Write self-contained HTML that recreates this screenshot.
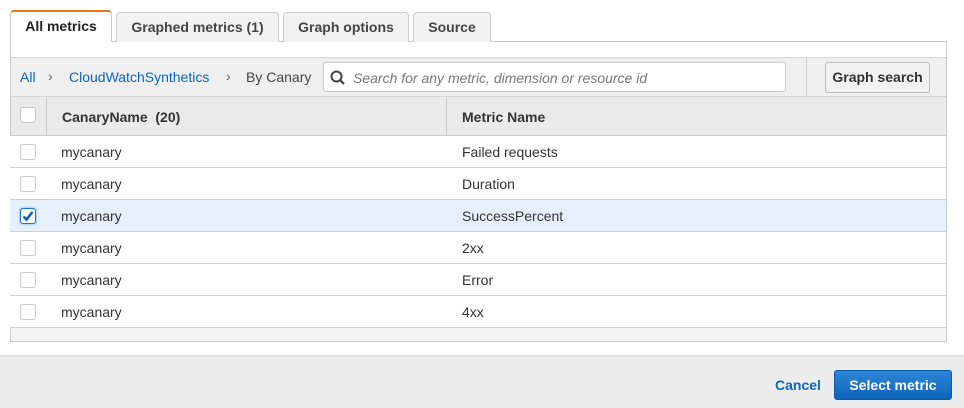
<!DOCTYPE html><html><head><style>
*{box-sizing:border-box;margin:0;padding:0}
body{width:964px;height:408px;background:#fff;font-family:"Liberation Sans",sans-serif;font-size:14px;color:#333;position:relative;overflow:hidden}
.a{position:absolute}
.tab{position:absolute;top:12px;height:30px;border:1px solid #ccc;border-bottom:none;border-radius:4px 4px 0 0;background:#f2f2f2;font-weight:bold;font-size:14px;text-align:center;line-height:28px;color:#444}
.cb{position:absolute;left:20px;width:16px;height:16px;border:1px solid #c8c8c8;border-radius:3px;background:#fff}
.row{position:absolute;left:10px;width:936px;height:32px;border-bottom:1px solid #d0d0d0;background:#fff}
.row span{position:absolute;top:8px}
</style></head><body>
<div class="a" style="left:10px;top:41px;width:937px;height:301px;border:1px solid #ccc;background:#fff"></div>
<div class="tab" style="left:10px;width:102px;top:10px;height:32px;background:#fff;border-top:2px solid #e47911;color:#222">All metrics</div>
<div class="tab" style="left:116px;width:163px">Graphed metrics (1)</div>
<div class="tab" style="left:283px;width:126px">Graph options</div>
<div class="tab" style="left:413px;width:78px">Source</div>
<div class="a" style="left:11px;top:57px;width:935px;height:40px;background:#efefef;border-top:1px solid #d5d5d5;border-bottom:1px solid #d5d5d5"></div>
<div class="a" style="left:20px;top:69px;color:#0b66c2">All</div>
<div class="a" style="left:48px;top:68px;color:#666">›</div>
<div class="a" style="left:69px;top:69px;color:#0b66c2">CloudWatchSynthetics</div>
<div class="a" style="left:226px;top:68px;color:#666">›</div>
<div class="a" style="left:246px;top:69px;color:#444">By Canary</div>
<div class="a" style="left:323px;top:62px;width:463px;height:30px;background:#fff;border:1px solid #ccc;border-radius:3px"></div>
<svg class="a" style="left:330px;top:70px" width="16" height="16"><circle cx="6.5" cy="6.5" r="5" fill="none" stroke="#444" stroke-width="2"/><line x1="10" y1="10" x2="14" y2="14" stroke="#444" stroke-width="2.2"/></svg>
<div class="a" style="left:353px;top:70px;color:#777;font-style:italic">Search for any metric, dimension or resource id</div>
<div class="a" style="left:806px;top:57px;width:1px;height:40px;background:#d5d5d5"></div>
<div class="a" style="left:825px;top:62px;width:105px;height:31px;border:1px solid #bbb;border-radius:3px;background:#f2f2f2;font-weight:bold;text-align:center;line-height:29px;color:#333">Graph search</div>
<div class="a" style="left:11px;top:97px;width:935px;height:39px;background:#eaeaea;border-bottom:1px solid #ccc"></div>
<div class="a" style="left:46px;top:97px;width:1px;height:39px;background:#ccc"></div>
<div class="a" style="left:446px;top:97px;width:1px;height:39px;background:#ccc"></div>
<div class="cb" style="top:107px"></div>
<div class="a" style="left:62px;top:109px;font-weight:bold">CanaryName&nbsp; (20)</div>
<div class="a" style="left:462px;top:109px;font-weight:bold">Metric Name</div>
<div class="row" style="top:136px"><span style="left:51px">mycanary</span><span style="left:452px">Failed requests</span></div>
<div class="row" style="top:168px"><span style="left:51px">mycanary</span><span style="left:452px">Duration</span></div>
<div class="row" style="top:200px;background:#e5f0fb"><span style="left:51px">mycanary</span><span style="left:452px">SuccessPercent</span></div>
<div class="row" style="top:232px"><span style="left:51px">mycanary</span><span style="left:452px">2xx</span></div>
<div class="row" style="top:264px"><span style="left:51px">mycanary</span><span style="left:452px">Error</span></div>
<div class="row" style="top:296px"><span style="left:51px">mycanary</span><span style="left:452px">4xx</span></div>
<div class="cb" style="top:144px"></div><div class="cb" style="top:176px"></div>
<div class="cb" style="top:208px;border-color:#1a73d9;box-shadow:0 0 2px #5aa0f0"><svg width="14" height="14" style="position:absolute;left:0;top:0"><path d="M2.5 7.5 L5.5 10.5 L11.5 3" fill="none" stroke="#0b5fb8" stroke-width="2.6"/></svg></div>
<div class="cb" style="top:240px"></div><div class="cb" style="top:272px"></div><div class="cb" style="top:304px"></div>
<div class="a" style="left:11px;top:328px;width:935px;height:13px;background:#f4f4f4"></div>
<div class="a" style="left:0;top:355px;width:964px;height:53px;background:#ececec;border-top:1px solid #ddd"></div>
<div class="a" style="left:775px;top:377px;color:#0b66c2;font-weight:bold">Cancel</div>
<div class="a" style="left:834px;top:370px;width:118px;height:30px;border-radius:3px;background:linear-gradient(#2e86d9,#0d63b8);border:1px solid #0a5aa8;color:#fff;font-weight:bold;text-align:center;line-height:28px">Select metric</div>
</body></html>
